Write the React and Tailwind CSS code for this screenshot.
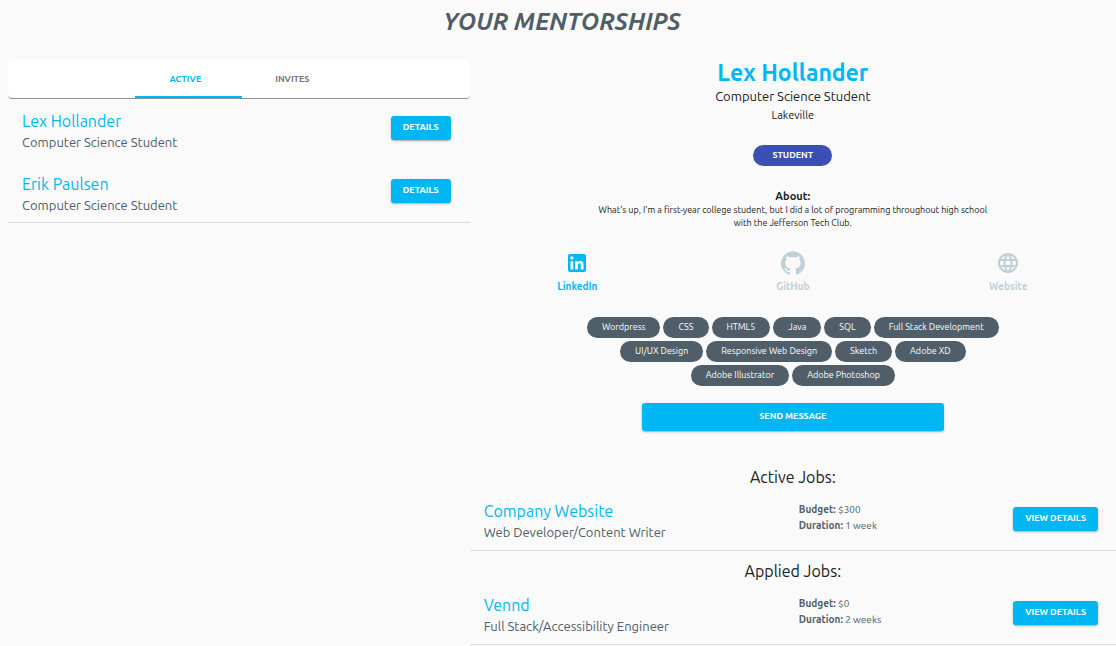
import { useState } from "react";
import { MdLanguage } from "react-icons/md";

const mentorships = [
  { name: "Lex Hollander", title: "Computer Science Student" },
  { name: "Erik Paulsen", title: "Computer Science Student" },
];

const skills = [
  "Wordpress",
  "CSS",
  "HTML5",
  "Java",
  "SQL",
  "Full Stack Development",
  "UI/UX Design",
  "Responsive Web Design",
  "Sketch",
  "Adobe XD",
  "Adobe Illustrator",
  "Adobe Photoshop",
];

const shadow =
  "shadow-[0_1px_3px_rgba(0,0,0,0.2),0_1px_1px_rgba(0,0,0,0.14)]";

function LinkedInIcon() {
  return (
    <svg viewBox="0 0 24 24" className="size-6" fill="currentColor" aria-hidden="true">
      <path d="M19 3a2 2 0 0 1 2 2v14a2 2 0 0 1-2 2H5a2 2 0 0 1-2-2V5a2 2 0 0 1 2-2h14m-.5 15.5v-5.3a3.26 3.26 0 0 0-3.26-3.26c-.85 0-1.84.52-2.32 1.3v-1.11h-2.79v8.37h2.79v-4.93c0-.77.62-1.4 1.39-1.4a1.4 1.4 0 0 1 1.4 1.4v4.93h2.79M6.88 8.56a1.68 1.68 0 0 0 1.68-1.68c0-.93-.75-1.69-1.68-1.69a1.69 1.69 0 0 0-1.69 1.69c0 .93.76 1.68 1.69 1.68m1.39 9.94v-8.37H5.5v8.37h2.77z" />
    </svg>
  );
}

function GitHubIcon() {
  return (
    <svg viewBox="0 0 24 24" className="size-6" fill="currentColor" aria-hidden="true">
      <path d="M12 .3a12 12 0 0 0-3.8 23.4c.6.1.8-.3.8-.6v-2c-3.3.7-4-1.6-4-1.6-.6-1.4-1.4-1.8-1.4-1.8-1-.7.1-.7.1-.7 1.2 0 1.9 1.2 1.9 1.2 1 1.8 2.8 1.3 3.5 1 0-.8.4-1.3.7-1.6-2.7-.3-5.5-1.3-5.5-6 0-1.2.5-2.3 1.3-3.1-.2-.4-.6-1.6 0-3.2 0 0 1-.3 3.4 1.2a11.5 11.5 0 0 1 6 0c2.3-1.5 3.3-1.2 3.3-1.2.6 1.6.2 2.8 0 3.2.9.8 1.3 1.9 1.3 3.2 0 4.6-2.8 5.6-5.5 5.9.5.4.9 1 .9 2.2v3.3c0 .3.1.7.8.6A12 12 0 0 0 12 .3" />
    </svg>
  );
}

function ActionButton({ children }) {
  return (
    <button
      type="button"
      className={`h-6 shrink-0 rounded-[3px] bg-[#00b7f4] px-3 text-[9px] font-bold whitespace-nowrap text-white uppercase ${shadow}`}
    >
      {children}
    </button>
  );
}

function Tab({ active, onClick, children }) {
  return (
    <button
      type="button"
      role="tab"
      aria-selected={active}
      onClick={onClick}
      className={`h-[38px] w-[107px] border-b-2 pt-1 pr-1.5 text-[9px] font-bold uppercase ${
        active ? "border-[#00b7f4] text-[#00b7f4]" : "border-transparent text-[#757575]"
      }`}
    >
      {children}
    </button>
  );
}

function ProfileLink({ icon, label, active }) {
  return (
    <a
      href="#"
      className={`flex flex-col items-center gap-1 justify-self-center text-[10px] leading-4 font-bold ${
        active ? "text-[#00b7f4]" : "text-[#c0d0d9]"
      }`}
    >
      {icon}
      {label}
    </a>
  );
}

function Job({ heading, name, role, budget, duration }) {
  return (
    <section className="border-b border-[#d9dbdc] pb-2">
      <h3 className="text-center text-base leading-6 text-[#212121]">{heading}</h3>
      <div className="flex items-start pt-[11px] pr-[18px] pl-3.5">
        <div className="w-1/2">
          <h4 className="text-base leading-[22px] text-[#00b7f4]">{name}</h4>
          <p className="text-[13px] leading-5">{role}</p>
        </div>
        <div className="flex-1 pt-0.5 pl-2 text-[10px] leading-4">
          <p>
            <strong>Budget:</strong> {budget}
          </p>
          <p>
            <strong>Duration:</strong> {duration}
          </p>
        </div>
        <div className="flex pt-[7px]">
          <ActionButton>View Details</ActionButton>
        </div>
      </div>
    </section>
  );
}

export default function App() {
  const [tab, setTab] = useState("active");

  return (
    <main className="min-h-screen bg-[#fafafa] pl-2 font-['Ubuntu','Noto_Sans',sans-serif] text-[#4f5e68]">
      <h1 className="pt-1.5 text-center text-2xl leading-8 font-bold italic">YOUR MENTORSHIPS</h1>

      <div className="grid grid-cols-12 items-start pt-[22px]">
        <section className="col-span-5">
          <div
            role="tablist"
            className="flex justify-center rounded border-b border-[#8f9294] bg-white pl-1.5"
          >
            <Tab active={tab === "active"} onClick={() => setTab("active")}>Active</Tab>
            <Tab active={tab === "invites"} onClick={() => setTab("invites")}>Invites</Tab>
          </div>
          <ul className="flex flex-col gap-[21px] border-b border-[#d9dbdc] pt-[11px] pb-[7px]">
            {mentorships.map((person) => (
              <li key={person.name} className="flex items-start justify-between pr-[19px] pl-3.5">
                <div>
                  <h2 className="text-base leading-[22px] text-[#00b7f4]">{person.name}</h2>
                  <p className="text-[13px] leading-5">{person.title}</p>
                </div>
                <div className="flex pt-1.5">
                  <ActionButton>Details</ActionButton>
                </div>
              </li>
            ))}
          </ul>
        </section>

        <section className="col-span-7">
          <div className="flex flex-col items-center text-center text-[#212121]">
            <h2 className="text-[23px] leading-[26px] font-bold text-[#00b7f4]">Lex Hollander</h2>
            <p className="text-[13px] leading-5">Computer Science Student</p>
            <p className="text-[11px] leading-[18px]">Lakeville</p>
            <span className="mt-[21px] flex h-[21px] items-center rounded-full bg-[#3a50b4] px-[19px] text-[9px] font-bold text-white">
              STUDENT
            </span>
            <h3 className="mt-[22px] text-[11px] leading-4 font-bold">About:</h3>
            <p className="w-2/3 px-3 text-[9px] leading-[13px]">
              What's up, I'm a first-year college student, but I did a lot of programming throughout high school with
              the Jefferson Tech Club.
            </p>
          </div>

          <nav aria-label="Profile links" className="mt-[21px] grid grid-cols-3">
            <ProfileLink icon={<LinkedInIcon />} label="LinkedIn" active />
            <ProfileLink icon={<GitHubIcon />} label="GitHub" />
            <ProfileLink icon={<MdLanguage className="size-6" aria-hidden="true" />} label="Website" />
          </nav>

          <ul className="mx-auto mt-[22px] flex w-2/3 flex-wrap justify-center gap-[3px]">
            {skills.map((skill) => (
              <li
                key={skill}
                className="flex h-[21px] items-center rounded-full bg-[#4f5e68] px-[15px] text-[9px] text-white"
              >
                {skill}
              </li>
            ))}
          </ul>

          <button
            type="button"
            className={`mx-auto mt-[17px] block h-7 w-[302px] rounded-[3px] bg-[#00b7f4] text-[9px] font-bold text-white uppercase ${shadow}`}
          >
            Send Message
          </button>

          <div className="mt-[34px] flex flex-col gap-2">
            <Job
              heading="Active Jobs:"
              name="Company Website"
              role="Web Developer/Content Writer"
              budget="$300"
              duration="1 week"
            />
            <Job
              heading="Applied Jobs:"
              name="Vennd"
              role="Full Stack/Accessibility Engineer"
              budget="$0"
              duration="2 weeks"
            />
          </div>
        </section>
      </div>
    </main>
  );
}
